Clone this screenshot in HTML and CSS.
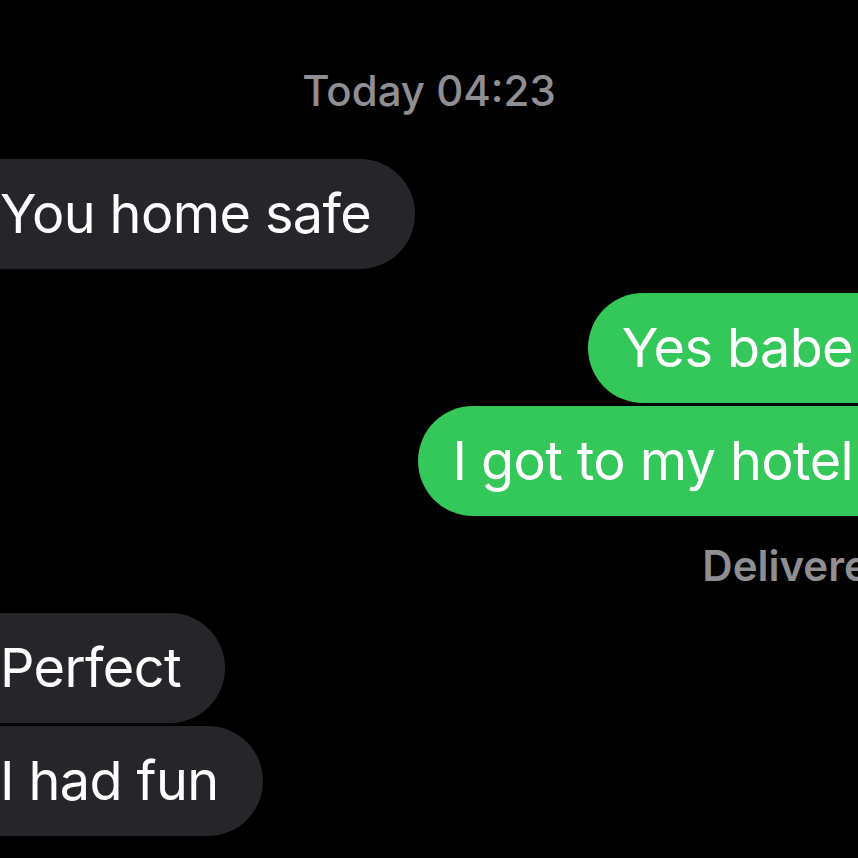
FILE: index.html
```html
<!DOCTYPE html>
<html lang="en">
<head>
    <meta charset="UTF-8">
    <meta name="viewport" content="width=device-width, initial-scale=1.0">
    <title>Messages</title>
    <link rel="stylesheet" href="styles.css">
</head>
<body>
    <div class="chat">
        <div class="timestamp"><span class="day">Today</span> 04:23</div>

        <div class="msg msg-in">
            <div class="bubble">You home safe</div>
        </div>

        <div class="group group-out">
            <div class="msg msg-out">
                <div class="bubble">Yes babe</div>
            </div>
            <div class="msg msg-out">
                <div class="bubble">I got to my hotel</div>
            </div>
            <div class="status">Delivered</div>
        </div>

        <div class="group group-in">
            <div class="msg msg-in">
                <div class="bubble">Perfect</div>
            </div>
            <div class="msg msg-in">
                <div class="bubble">I had fun</div>
            </div>
        </div>
    </div>
</body>
</html>
```

FILE: styles.css
```css
/* iMessage dark mode, zoomed in */
:root {
    --bg: #000000;
    --bubble-in: #262529;
    --bubble-out: #34c759;
    --text: #ffffff;
    --meta: #8e8e93;
}

html, body {
    margin: 0;
    height: 100%;
}

body {
    background-color: var(--bg);
    color: var(--text);
    font-family: Inter, "Noto Sans", sans-serif;
    overflow: hidden;
}

/* the screenshot is cropped, so the column runs past both edges */
.chat {
    display: flex;
    flex-direction: column;
    margin: 0 -60px 0 -60px;
}

.timestamp {
    text-align: center;
    color: var(--meta);
    font-size: 42px;
    font-weight: 500;
    line-height: 50px;
    margin-top: 66px;
    margin-bottom: 43px;
}

.group {
    display: flex;
    flex-direction: column;
    gap: 3px;
}

.group-out {
    margin-top: 24px;
}

.group-in {
    margin-top: 22px;
}

.msg {
    display: flex;
}

.msg-in {
    justify-content: flex-start;
}

.msg-out {
    justify-content: flex-end;
}

.bubble {
    font-size: 54px;
    letter-spacing: -0.6px;
    line-height: 110px;
    height: 110px;
    border-radius: 55px;
    white-space: nowrap;
}

.msg-in .bubble {
    background-color: var(--bubble-in);
    padding: 0 44px 0 60px;
}

.msg-out .bubble {
    background-color: var(--bubble-out);
    padding: 0 65px 0 34px;
}

.status {
    align-self: flex-end;
    color: var(--meta);
    font-size: 42px;
    font-weight: 600;
    line-height: 50px;
    margin-top: 22px;
    margin-right: 23px;
}
```
